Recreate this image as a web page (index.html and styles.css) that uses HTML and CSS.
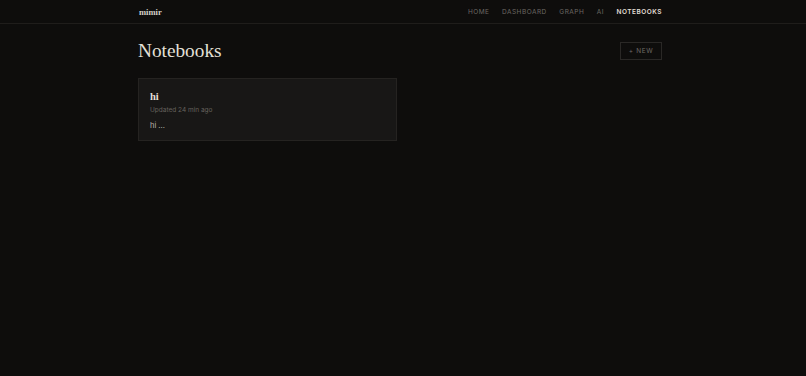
FILE: index.html
```html
<!DOCTYPE html>
<html lang="en">
<head>
    <meta charset="UTF-8">
    <meta name="viewport" content="width=device-width, initial-scale=1.0">
    <title>Notebooks - mimir</title>
    <link rel="stylesheet" href="styles.css">
</head>
<body>
    <header class="topbar">
        <div class="topbar-inner">
            <a class="brand" href="#">mimir</a>
            <nav class="nav">
                <a href="#">Home</a>
                <a href="#">Dashboard</a>
                <a href="#">Graph</a>
                <a href="#">AI</a>
                <a href="#" class="active">Notebooks</a>
            </nav>
        </div>
    </header>
    <main class="page">
        <div class="page-head">
            <h1>Notebooks</h1>
            <button class="new-btn">+ New</button>
        </div>
        <div class="grid">
            <div class="card">
                <h2>hi</h2>
                <div class="meta">Updated 24 min ago</div>
                <div class="preview">hi ...</div>
            </div>
        </div>
    </main>
</body>
</html>
```

FILE: styles.css
```css
body {
    margin: 0;
    background-color: #0e0d0c;
    color: #d8d4cc;
    font-family: Inter, "Liberation Sans", sans-serif;
    height: 100vh;
}

a {
    color: inherit;
    text-decoration: none;
}

.topbar {
    border-bottom: 1px solid #1f1d1b;
}

.topbar-inner {
    width: 524px;
    margin-left: 138px;
    height: 23px;
    display: flex;
    align-items: center;
    justify-content: space-between;
}

.brand {
    font-family: "Liberation Serif", serif;
    font-weight: bold;
    font-size: 8.5px;
    color: #d6d2ca;
    padding-left: 1px;
}

.nav {
    display: flex;
    gap: 12.5px;
}

.nav a {
    font-size: 6.5px;
    letter-spacing: 0.5px;
    text-transform: uppercase;
    color: #6c6863;
}

.nav a.active {
    color: #e2ded6;
    font-weight: 600;
}

.page {
    width: 524px;
    margin-left: 138px;
}

.page-head {
    display: flex;
    justify-content: space-between;
    align-items: center;
    margin-top: 17px;
    height: 20px;
}

h1 {
    margin: 0;
    font-family: "Liberation Serif", serif;
    font-weight: normal;
    font-size: 19.3px;
    color: #e4e0d8;
}

.new-btn {
    font-family: Inter, "Liberation Sans", sans-serif;
    background: transparent;
    border: 1px solid #2a2826;
    color: #6e6a65;
    font-size: 6.5px;
    letter-spacing: 0.6px;
    text-transform: uppercase;
    width: 42px;
    height: 18px;
    padding: 0;
    cursor: pointer;
}

.grid {
    display: grid;
    grid-template-columns: 1fr 1fr;
    gap: 6px;
    margin-top: 17px;
}

.card {
    background: #181716;
    border: 1px solid #252321;
    padding: 12px 11px 8px;
    height: 41px;
}

.card h2 {
    margin: 0;
    font-family: "Liberation Serif", serif;
    font-size: 10.5px;
    font-weight: bold;
    color: #e2ded6;
}

.meta {
    margin-top: 4px;
    font-size: 6.5px;
    color: #66625d;
}

.preview {
    margin-top: 7px;
    font-size: 7.5px;
    color: #bdb8b0;
}
```
